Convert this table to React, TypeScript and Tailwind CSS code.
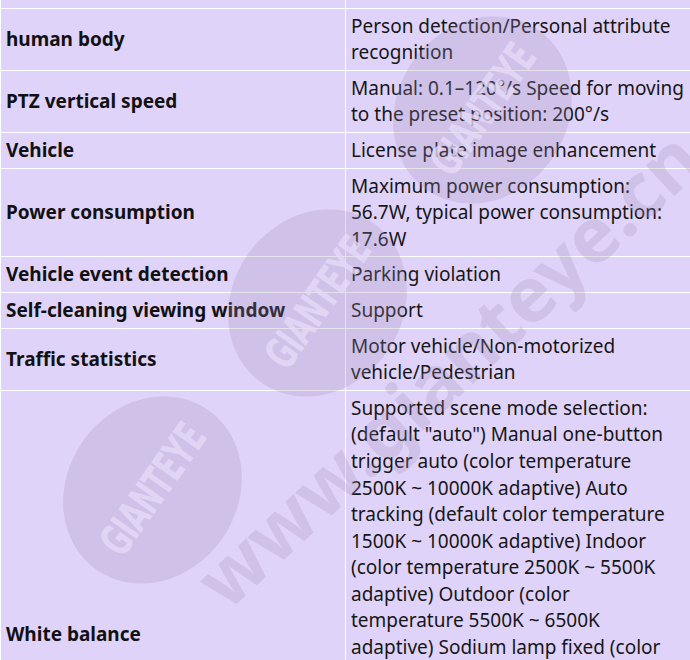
const rows: { label: string; value: string }[] = [
  { label: "human body", value: "Person detection/Personal attribute recognition" },
  { label: "PTZ vertical speed", value: "Manual: 0.1–120°/s Speed for moving to the preset position: 200°/s" },
  { label: "Vehicle", value: "License plate image enhancement" },
  {
    label: "Power consumption",
    value: "Maximum power consumption: 56.7W, typical power consumption: 17.6W",
  },
  { label: "Vehicle event detection", value: "Parking violation" },
  { label: "Self-cleaning viewing window", value: "Support" },
  { label: "Traffic statistics", value: "Motor vehicle/Non-motorized vehicle/Pedestrian" },
  {
    label: "White balance",
    value:
      'Supported scene mode selection: (default "auto") Manual one-button trigger auto (color temperature 2500K ~ 10000K adaptive) Auto tracking (default color temperature 1500K ~ 10000K adaptive) Indoor (color temperature 2500K ~ 5500K adaptive) Outdoor (color temperature 5500K ~ 6500K adaptive) Sodium lamp fixed (color temperature 2000K) Fluorescent lamp fixed (color temperature 4000K) Natural light (color temperature 2500K ~ 8000K adaptive) Street lamp (color temperature 1800K ~ 3000K adaptive) Manual white balance, R/B gain adjustable, supports locking the current white balance',
  },
];

function Badge({ className }: { className: string }) {
  return (
    <div
      className={`absolute w-[195px] h-[170px] rounded-[50%] bg-[#9a8cb4]/25 -rotate-[55deg] flex items-center justify-center ${className}`}
    >
      <span className="text-[44px] font-bold tracking-tight text-[#e6dcf8]/75 [font-family:'Liberation_Sans_Narrow','DejaVu_Sans_Condensed',sans-serif] scale-x-[0.7]">
        GIANTEYE
      </span>
    </div>
  );
}

export default function App() {
  return (
    <div className="relative w-[690px] h-[660px] overflow-hidden bg-[#e0d3fa] text-[19px] leading-[26.6px] text-[#161616] [font-family:'Noto_Sans',sans-serif]">
      <table className="w-[700px] -mt-[32px] border-collapse table-fixed">
        <colgroup>
          <col className="w-[345px]" />
          <col />
        </colgroup>
        <tbody>
          <tr>
            <td className="border border-white px-[5px] pt-[4px] pb-[8px] font-bold">Image</td>
            <td className="border border-white px-[5px] pt-[4px] pb-[8px]">Defogging/Image processing support</td>
          </tr>
          {rows.map((r) => (
            <tr key={r.label}>
              <td className="border border-white px-[5px] py-[4px] font-bold text-[#111] align-middle">
                {r.label}
              </td>
              <td className="border border-white pl-[5px] pr-[12px] py-[4px] align-top">{r.value}</td>
            </tr>
          ))}
        </tbody>
      </table>

      {/* watermark */}
      <div className="pointer-events-none absolute inset-0">
        <Badge className="left-[385px] top-[25px]" />
        <Badge className="left-[220px] top-[218px]" />
        <Badge className="left-[55px] top-[405px]" />
        <div className="absolute left-[120px] top-[355px] -rotate-[43deg] origin-center text-[76px] font-bold text-[#9a8cb4]/25 whitespace-nowrap [font-family:'Noto_Sans',sans-serif]">
          www.gianteye.cn
        </div>
      </div>
    </div>
  );
}
